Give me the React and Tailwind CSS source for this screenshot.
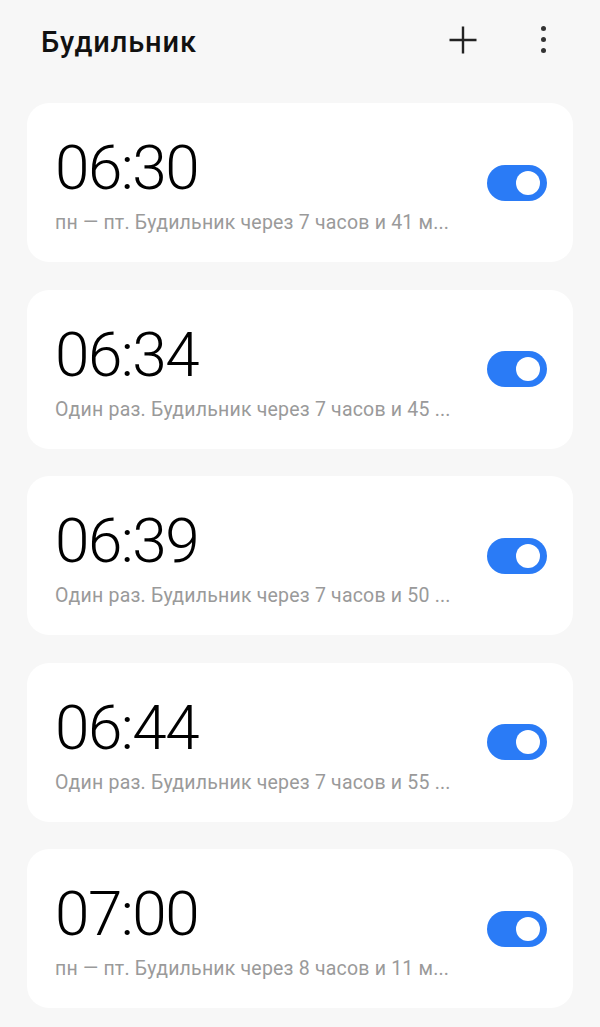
import React from "react";

const alarms = [
  { time: "06:30", text: "пн — пт. Будильник через 7 часов и 41 м..." },
  { time: "06:34", text: "Один раз. Будильник через 7 часов и 45 ..." },
  { time: "06:39", text: "Один раз. Будильник через 7 часов и 50 ..." },
  { time: "06:44", text: "Один раз. Будильник через 7 часов и 55 ..." },
  { time: "07:00", text: "пн — пт. Будильник через 8 часов и 11 м..." },
];

function Toggle() {
  return (
    <div className="w-[60px] h-[36px] rounded-full bg-[#2a7bf6] flex items-center justify-end pr-[7px] shrink-0">
      <div className="w-[24px] h-[24px] rounded-full bg-white" />
    </div>
  );
}

export default function App() {
  return (
    <div
      className="w-[600px] h-[1027px] bg-[#f7f7f7] overflow-hidden"
      style={{ fontFamily: "Roboto, 'Noto Sans', sans-serif" }}
    >
      <header className="h-[86px] flex items-center pl-[41px] pr-[54px]">
        <h1 className="text-[29px] font-medium text-[#111] flex-1 tracking-[0.9px]">Будильник</h1>
        <svg width="30" height="30" viewBox="0 0 30 30" className="mr-[63px] mt-[-6px]">
          <path d="M15 1.5V28.5M1.5 15H28.5" stroke="#222" strokeWidth="2.4" />
        </svg>
        <div className="flex flex-col gap-[6px] mt-[-8px]">
          <div className="w-[5px] h-[5px] rounded-full bg-[#333]" />
          <div className="w-[5px] h-[5px] rounded-full bg-[#333]" />
          <div className="w-[5px] h-[5px] rounded-full bg-[#333]" />
        </div>
      </header>
      <div className="flex flex-col gap-[27.5px] pt-[17px] px-[27px]">
        {alarms.map((a) => (
          <div
            key={a.time}
            className="h-[159px] bg-white rounded-[22px] flex items-center pl-[28px] pr-[26px]"
          >
            <div className="flex-1 self-stretch flex flex-col pt-[34px]">
              <div className="text-[62px] leading-none font-light text-black tracking-[-1.5px]">
                {a.time}
              </div>
              <div className="mt-[13px] text-[19.5px] leading-[22px] text-[#9a9a9a] whitespace-nowrap tracking-[0.2px]">
                {a.text}
              </div>
            </div>
            <Toggle />
          </div>
        ))}
      </div>
    </div>
  );
}
